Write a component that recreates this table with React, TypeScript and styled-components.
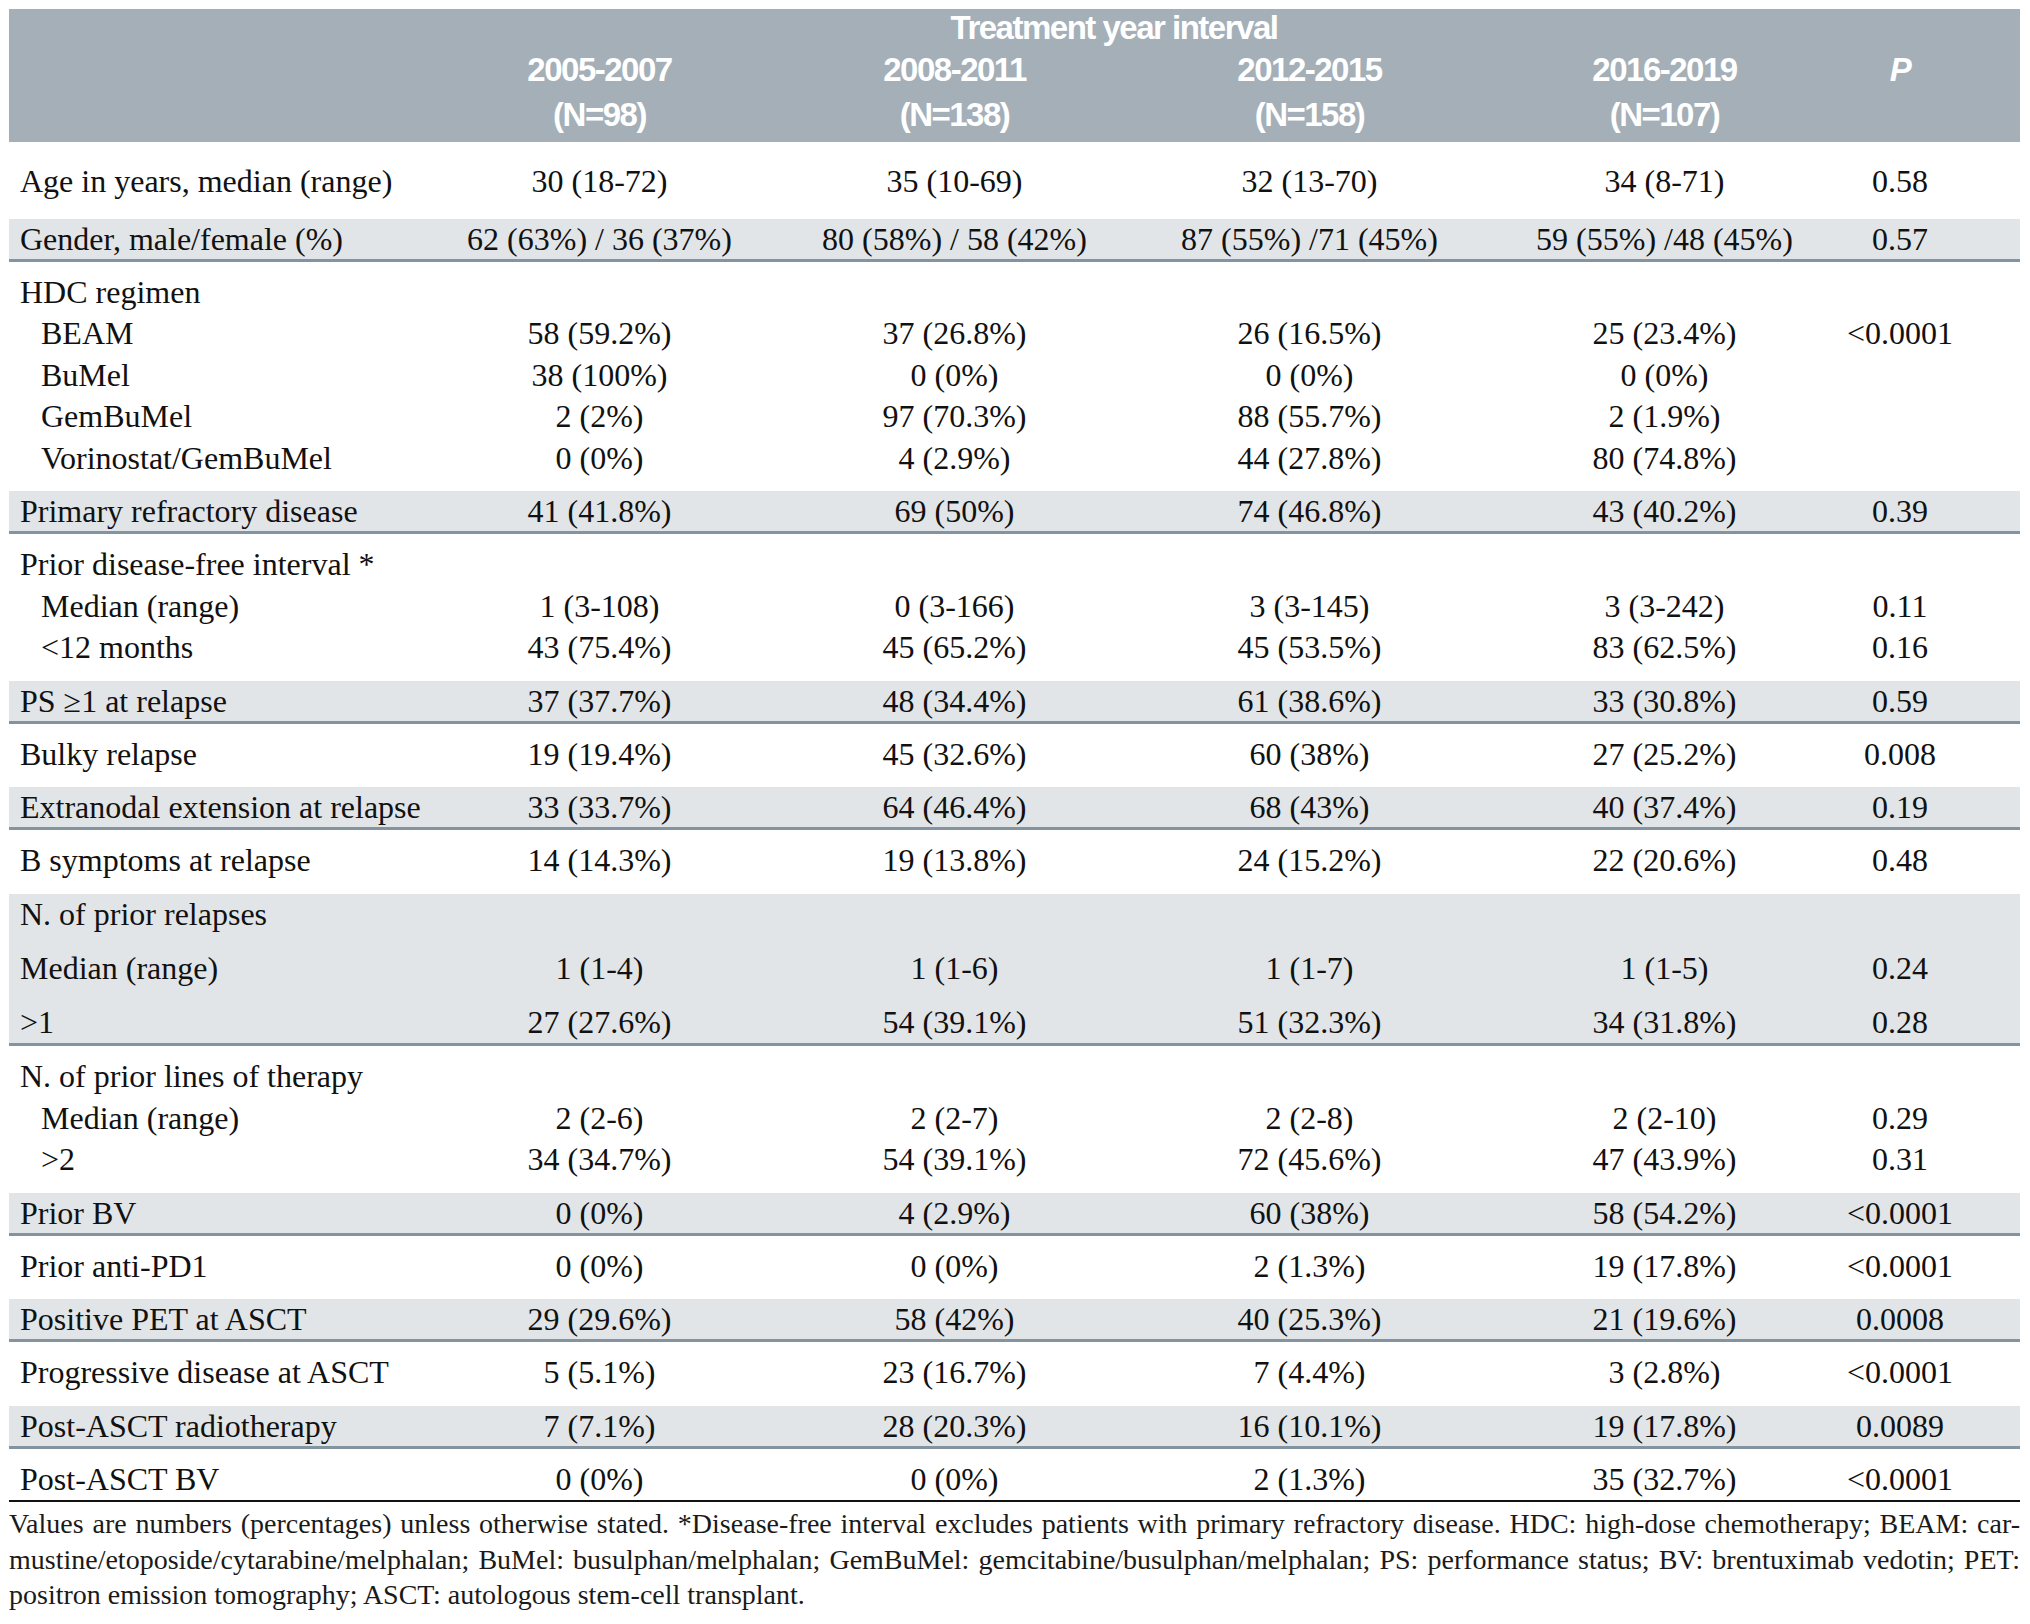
import React from 'react'
import styled, { createGlobalStyle, css } from 'styled-components'

const COLS = '413px repeat(4, 355px) 178px'

const GlobalStyle = createGlobalStyle`
    html, body {
        margin: 0;
        padding: 0;
        background: #ffffff;
    }
`

const Page = styled.div`
    width: 2011px;
    padding: 9px 10px 0 9px;
    font-family: 'Liberation Serif', 'Times New Roman', serif;
    color: #111111;
`

const Head = styled.div`
    background: #a4afb8;
    color: #ffffff;
    font-family: 'Liberation Sans', Arial, sans-serif;
    font-weight: 700;
    font-size: 33px;
    letter-spacing: -1.5px;
    padding-bottom: 5px;
`

const HeadGrid = styled.div`
    display: grid;
    grid-template-columns: ${COLS};
`

const Title = styled.div`
    grid-column: 2 / 6;
    text-align: center;
    line-height: 38px;
    padding-right: 36px;
`

const ColHead = styled.div<{ $p?: boolean }>`
    text-align: center;
    line-height: 45px;
    ${(p) =>
        p.$p &&
        css`
            font-style: italic;
            padding-right: 62px;
        `}
`

type Kind = 'first' | 'plain' | 'shade' | 'last'

const Block = styled.div<{ $kind: Kind; $gap?: boolean }>`
    display: flex;
    flex-direction: column;
    gap: ${(p) => (p.$gap ? '12.5px' : '0')};
    padding: ${(p) =>
        p.$kind === 'first'
            ? '19px 0 16px'
            : p.$kind === 'last'
            ? '10px 0 0'
            : p.$kind === 'plain'
            ? '10px 0 12px'
            : '0'};
    ${(p) =>
        p.$kind === 'shade' &&
        css`
            background: #e1e5e8;
            border-bottom: 3px solid #8394a0;
        `}
    ${(p) =>
        p.$kind === 'last' &&
        css`
            border-bottom: 2px solid #111111;
        `}
`

const Row = styled.div<{ $tight?: boolean }>`
    display: grid;
    grid-template-columns: ${COLS};
    font-size: 32px;
    line-height: ${(p) => (p.$tight ? '40px' : '41.5px')};
    white-space: nowrap;
`

const Label = styled.div<{ $indent?: boolean }>`
    padding-left: ${(p) => (p.$indent ? '32px' : '11px')};
`

const Value = styled.div<{ $p?: boolean }>`
    text-align: center;
    padding-right: ${(p) => (p.$p ? '62px' : '0')};
`

const Notes = styled.div`
    padding-top: 4px;
    font-size: 28px;
    line-height: 35.5px;
    color: #1a1a1a;
`

const NoteLine = styled.div<{ $justify?: boolean }>`
    text-align: ${(p) => (p.$justify ? 'justify' : 'left')};
    text-align-last: ${(p) => (p.$justify ? 'justify' : 'left')};
`

type Line = { label: string; indent?: boolean; v?: string[] }
type Group = { kind: Kind; gap?: boolean; lines: Line[] }

const groups: Group[] = [
    { kind: 'first', lines: [{ label: 'Age in years, median (range)', v: ['30 (18-72)', '35 (10-69)', '32 (13-70)', '34 (8-71)', '0.58'] }] },
    { kind: 'shade', lines: [{ label: 'Gender, male/female (%)', v: ['62 (63%) / 36 (37%)', '80 (58%) / 58 (42%)', '87 (55%) /71 (45%)', '59 (55%) /48 (45%)', '0.57'] }] },
    {
        kind: 'plain',
        lines: [
            { label: 'HDC regimen' },
            { label: 'BEAM', indent: true, v: ['58 (59.2%)', '37 (26.8%)', '26 (16.5%)', '25 (23.4%)', '<0.0001'] },
            { label: 'BuMel', indent: true, v: ['38 (100%)', '0 (0%)', '0 (0%)', '0 (0%)', ''] },
            { label: 'GemBuMel', indent: true, v: ['2 (2%)', '97 (70.3%)', '88 (55.7%)', '2 (1.9%)', ''] },
            { label: 'Vorinostat/GemBuMel', indent: true, v: ['0 (0%)', '4 (2.9%)', '44 (27.8%)', '80 (74.8%)', ''] },
        ],
    },
    { kind: 'shade', lines: [{ label: 'Primary refractory disease', v: ['41 (41.8%)', '69 (50%)', '74 (46.8%)', '43 (40.2%)', '0.39'] }] },
    {
        kind: 'plain',
        lines: [
            { label: 'Prior disease-free interval *' },
            { label: 'Median (range)', indent: true, v: ['1 (3-108)', '0 (3-166)', '3 (3-145)', '3 (3-242)', '0.11'] },
            { label: '<12 months', indent: true, v: ['43 (75.4%)', '45 (65.2%)', '45 (53.5%)', '83 (62.5%)', '0.16'] },
        ],
    },
    { kind: 'shade', lines: [{ label: 'PS ≥1 at relapse', v: ['37 (37.7%)', '48 (34.4%)', '61 (38.6%)', '33 (30.8%)', '0.59'] }] },
    { kind: 'plain', lines: [{ label: 'Bulky relapse', v: ['19 (19.4%)', '45 (32.6%)', '60 (38%)', '27 (25.2%)', '0.008'] }] },
    { kind: 'shade', lines: [{ label: 'Extranodal extension at relapse', v: ['33 (33.7%)', '64 (46.4%)', '68 (43%)', '40 (37.4%)', '0.19'] }] },
    { kind: 'plain', lines: [{ label: 'B symptoms at relapse', v: ['14 (14.3%)', '19 (13.8%)', '24 (15.2%)', '22 (20.6%)', '0.48'] }] },
    {
        kind: 'shade',
        gap: true,
        lines: [
            { label: 'N. of prior relapses' },
            { label: 'Median (range)', v: ['1 (1-4)', '1 (1-6)', '1 (1-7)', '1 (1-5)', '0.24'] },
            { label: '>1', v: ['27 (27.6%)', '54 (39.1%)', '51 (32.3%)', '34 (31.8%)', '0.28'] },
        ],
    },
    {
        kind: 'plain',
        lines: [
            { label: 'N. of prior lines of therapy' },
            { label: 'Median (range)', indent: true, v: ['2 (2-6)', '2 (2-7)', '2 (2-8)', '2 (2-10)', '0.29'] },
            { label: '>2', indent: true, v: ['34 (34.7%)', '54 (39.1%)', '72 (45.6%)', '47 (43.9%)', '0.31'] },
        ],
    },
    { kind: 'shade', lines: [{ label: 'Prior BV', v: ['0 (0%)', '4 (2.9%)', '60 (38%)', '58 (54.2%)', '<0.0001'] }] },
    { kind: 'plain', lines: [{ label: 'Prior anti-PD1', v: ['0 (0%)', '0 (0%)', '2 (1.3%)', '19 (17.8%)', '<0.0001'] }] },
    { kind: 'shade', lines: [{ label: 'Positive PET at ASCT', v: ['29 (29.6%)', '58 (42%)', '40 (25.3%)', '21 (19.6%)', '0.0008'] }] },
    { kind: 'plain', lines: [{ label: 'Progressive disease at ASCT', v: ['5 (5.1%)', '23 (16.7%)', '7 (4.4%)', '3 (2.8%)', '<0.0001'] }] },
    { kind: 'shade', lines: [{ label: 'Post-ASCT radiotherapy', v: ['7 (7.1%)', '28 (20.3%)', '16 (10.1%)', '19 (17.8%)', '0.0089'] }] },
    { kind: 'last', lines: [{ label: 'Post-ASCT BV', v: ['0 (0%)', '0 (0%)', '2 (1.3%)', '35 (32.7%)', '<0.0001'] }] },
]

const periods = [
    ['2005-2007', '(N=98)'],
    ['2008-2011', '(N=138)'],
    ['2012-2015', '(N=158)'],
    ['2016-2019', '(N=107)'],
]

const App: React.FC = () => {
    return (
        <>
            <GlobalStyle />
            <Page>
                <Head>
                    <HeadGrid>
                        <div />
                        <Title>Treatment year interval</Title>
                        <div />
                    </HeadGrid>
                    <HeadGrid>
                        <div />
                        {periods.map(([years, n]) => (
                            <ColHead key={years}>
                                {years}
                                <br />
                                {n}
                            </ColHead>
                        ))}
                        <ColHead $p>P</ColHead>
                    </HeadGrid>
                </Head>
                {groups.map((g, gi) => (
                    <Block key={gi} $kind={g.kind} $gap={g.gap}>
                        {g.lines.map((line, li) => {
                            const vals = line.v || ['', '', '', '', '']
                            return (
                                <Row key={li} $tight={g.kind === 'shade' && g.lines.length === 1}>
                                    <Label $indent={line.indent}>{line.label}</Label>
                                    {vals.map((val, vi) => (
                                        <Value key={vi} $p={vi === 4}>
                                            {val}
                                        </Value>
                                    ))}
                                </Row>
                            )
                        })}
                    </Block>
                ))}
                <Notes>
                    <NoteLine $justify>
                        Values are numbers (percentages) unless otherwise stated. *Disease-free interval excludes
                        patients with primary refractory disease. HDC: high-dose chemotherapy; BEAM: car-
                    </NoteLine>
                    <NoteLine $justify>
                        mustine/etoposide/cytarabine/melphalan; BuMel: busulphan/melphalan; GemBuMel:
                        gemcitabine/busulphan/melphalan; PS: performance status; BV: brentuximab vedotin; PET:
                    </NoteLine>
                    <NoteLine>positron emission tomography; ASCT: autologous stem-cell transplant.</NoteLine>
                </Notes>
            </Page>
        </>
    )
}

export default App
